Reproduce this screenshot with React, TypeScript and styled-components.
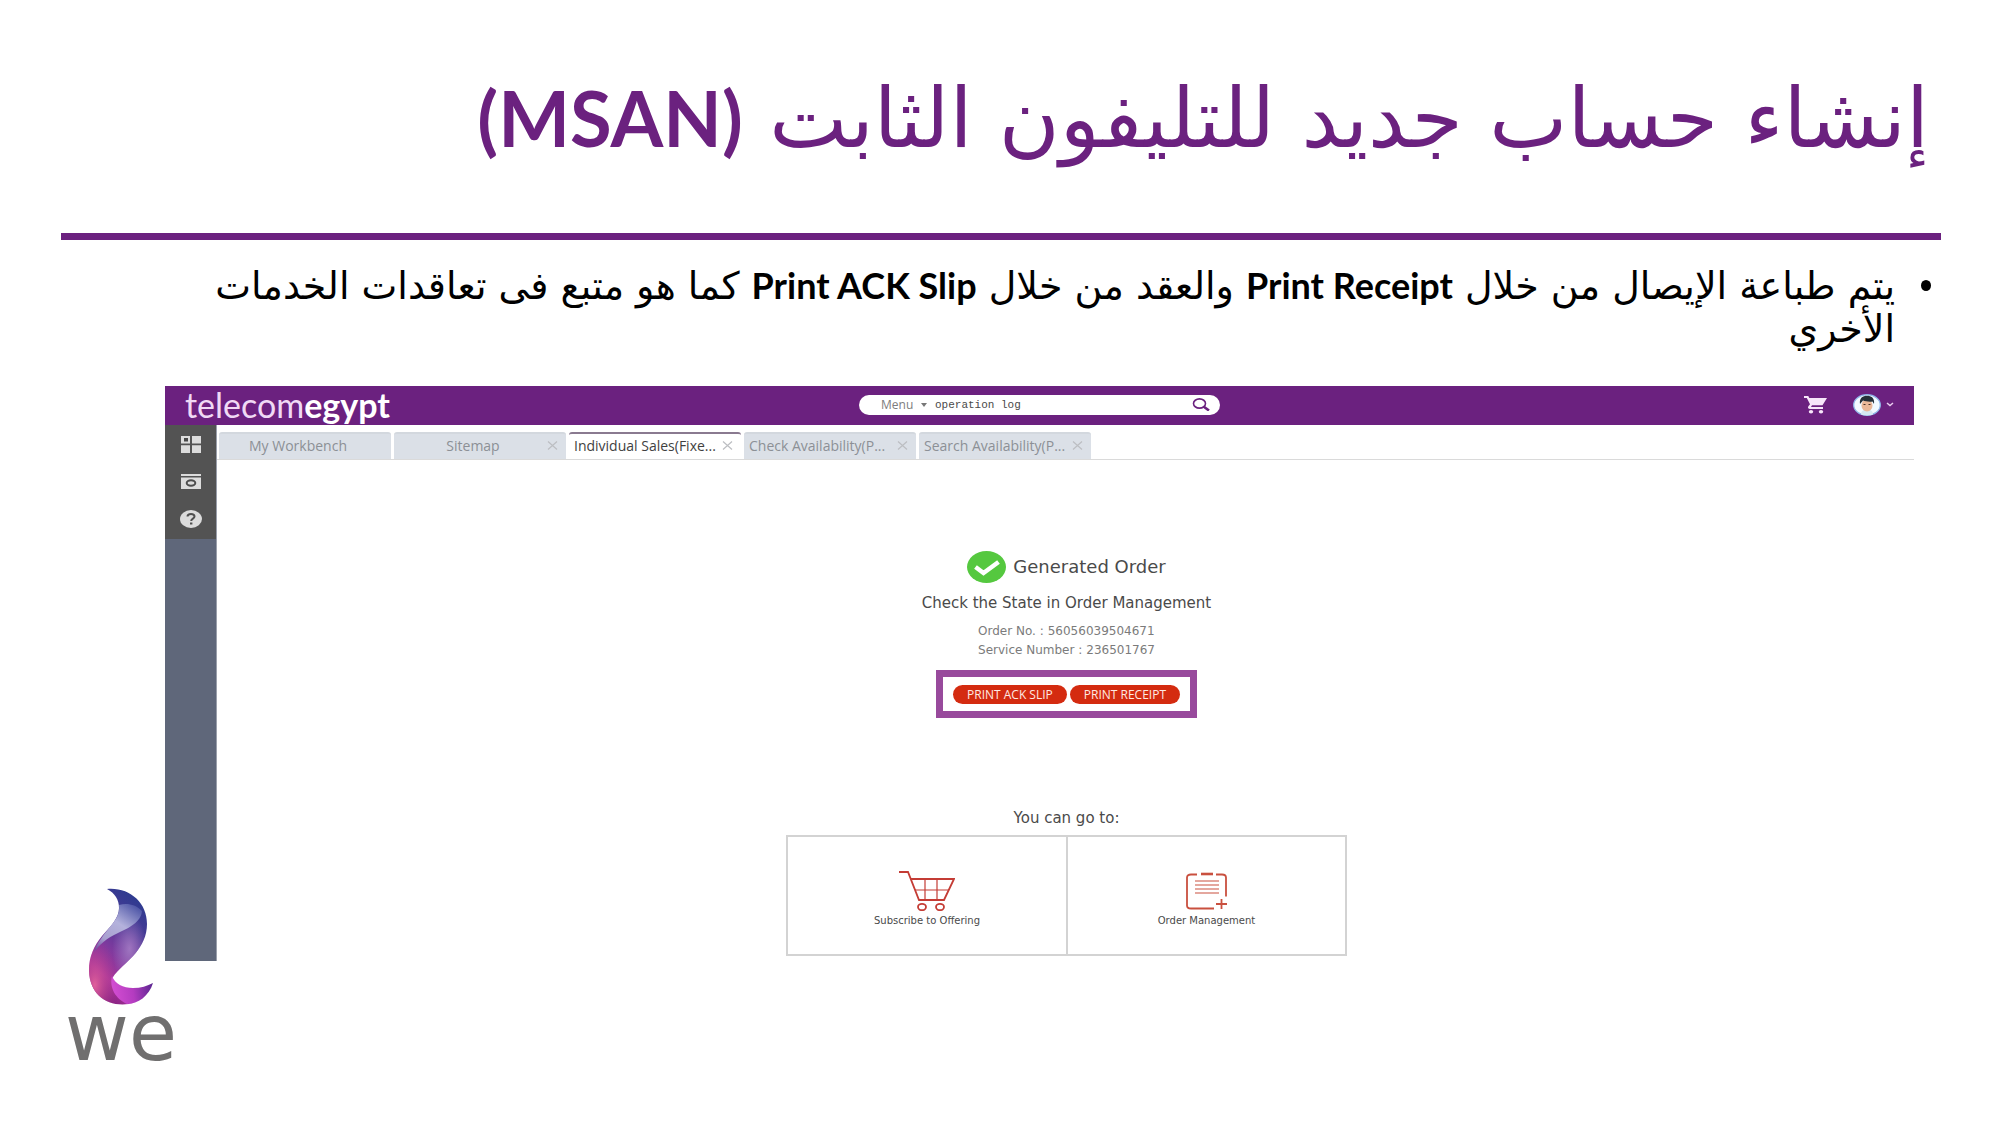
import React from "react";
import styled, { createGlobalStyle } from "styled-components";

const GlobalStyle = createGlobalStyle`
  *, *::before, *::after { box-sizing: border-box; }
  body { margin: 0; background: #ffffff; }
  h1, h2, p, ul, dl, dd { margin: 0; padding: 0; }
  button, input, select { font: inherit; color: inherit; border: 0; background: none; padding: 0; margin: 0; }
  button { cursor: pointer; }
`;

const purple = "#6b217f";

const Slide = styled.main`
  min-height: 100vh;
  padding: 68px 59px 0 61px;
  font-family: "DejaVu Sans", sans-serif;
`;

const TitleBar = styled.header`
  height: 172px;
  padding: 0 12px;
  border-bottom: 7px solid ${purple};
`;

const Title = styled.h1`
  color: ${purple};
  font-size: 83px;
  line-height: 100px;
  font-weight: 400;
  text-align: right;
  white-space: nowrap;
`;

const TitleLatin = styled.span`
  font-family: Lato, sans-serif;
  font-size: 76px;
  font-weight: 700;
`;

const Notes = styled.ul`
  padding: 24px 46px 0 120px;
  list-style: none;
  color: #000000;
`;

const Note = styled.li`
  position: relative;
  font-size: 38px;
  line-height: 43px;

  &::before {
    content: "";
    position: absolute;
    top: 16px;
    right: -36px;
    width: 10px;
    height: 11px;
    border-radius: 50%;
    background: #000000;
  }
`;

const NoteLatin = styled.span`
  font-family: Lato, sans-serif;
  font-size: 36px;
  font-weight: 700;
`;

const Figure = styled.section`
  position: relative;
  padding: 35px 27px 0 104px;
`;

const Screen = styled.div`
  font-size: 12px;
  color: #4a4a4a;
`;

const AppBar = styled.div`
  display: grid;
  grid-template-columns: 1fr 361px 1fr;
  align-items: center;
  height: 39px;
  padding: 0 20px 2px;
  background: ${purple};
`;

const Brand = styled.div`
  color: #f0d9f5;
  font-family: Lato, sans-serif;
  font-size: 34px;
  line-height: 36px;
`;

const BrandStrong = styled.strong`
  color: #ffffff;
  font-weight: 700;
`;

const SearchBox = styled.form`
  display: flex;
  align-items: center;
  gap: 8px;
  height: 20px;
  padding: 0 10px 0 22px;
  border-radius: 10px;
  background: #ffffff;
`;

const MenuPicker = styled.label`
  display: flex;
  align-items: center;
  gap: 6px;
  color: #7d7d7d;
`;

const MenuSelect = styled.select`
  appearance: none;
  width: 34px;
  font-family: "Open Sans", sans-serif;
  font-size: 12px;
  line-height: 16px;
`;

const SearchInput = styled.input`
  flex: 1;
  min-width: 0;
  font-family: "Liberation Mono", monospace;
  font-size: 11px;
  line-height: 16px;
  outline: none;
`;

const IconButton = styled.button`
  display: flex;
  align-items: center;
  color: ${purple};
`;

const BarActions = styled.div`
  display: flex;
  align-items: center;
  justify-content: flex-end;
  gap: 26px;
`;

const Account = styled.button`
  display: flex;
  align-items: center;
  gap: 5px;
`;

const Workspace = styled.div`
  display: grid;
  grid-template-columns: 52px 1fr;
  height: 536px;
`;

const SideBar = styled.nav`
  background: #5f677a;
  border-right: 1px solid #9a9fab;
`;

const SideTools = styled.div`
  display: flex;
  flex-direction: column;
  align-items: center;
  justify-content: space-around;
  height: 114px;
  background: #535353;
`;

const Content = styled.div`
  display: flex;
  flex-direction: column;
  min-width: 0;
`;

const Tabs = styled.div`
  display: flex;
  gap: 3px;
  height: 35px;
  padding: 7px 0 0 2px;
  border-bottom: 1px solid #dadada;
`;

const Tab = styled.div<{ $active?: boolean }>`
  display: flex;
  align-items: center;
  width: 172px;
  padding: 0 8px 2px 5px;
  border-top: 2px solid ${(p) => (p.$active ? "#8a7a90" : "#d3d8de")};
  border-radius: 3px 3px 0 0;
  background: ${(p) => (p.$active ? "#ffffff" : "#dbe0e7")};
  color: ${(p) => (p.$active ? "#3f3f3f" : "#8c9096")};
`;

const TabLabel = styled.button<{ $center?: boolean }>`
  flex: 1;
  font-family: "Open Sans", sans-serif;
  font-size: 14px;
  line-height: 20px;
  white-space: nowrap;
  text-align: ${(p) => (p.$center ? "center" : "left")};
`;

const TabClose = styled.button<{ $hidden?: boolean }>`
  display: flex;
  color: #bcbec2;
  visibility: ${(p) => (p.$hidden ? "hidden" : "visible")};
`;

const Result = styled.div`
  display: flex;
  flex-direction: column;
  align-items: center;
  padding: 89px 0 0 2px;
`;

const ResultHead = styled.div`
  display: flex;
  align-items: center;
  gap: 7px;
`;

const ResultTitle = styled.h2`
  font-size: 18px;
  line-height: 36px;
  font-weight: 400;
`;

const ResultText = styled.p`
  padding-top: 6px;
  font-size: 15px;
  line-height: 24px;
`;

const Facts = styled.dl`
  padding-top: 7px;
  color: #7b7b7b;
  font-size: 12px;
  line-height: 19px;
`;

const Fact = styled.div`
  display: flex;
  gap: 4px;
`;

const Highlight = styled.div`
  display: flex;
  gap: 3px;
  align-items: center;
  justify-content: center;
  width: 261px;
  height: 48px;
  margin-top: 10px;
  border: 7px solid #984a9c;
`;

const PrintButton = styled.button`
  height: 19px;
  padding: 0 14px;
  border-radius: 10px;
  background: #d42b10;
  color: #ffe9e2;
  font-family: "Open Sans", sans-serif;
  font-size: 12px;
  line-height: 19px;
  white-space: nowrap;
`;

const NextTitle = styled.p`
  padding: 88px 0 5px;
  font-size: 15px;
  line-height: 24px;
`;

const NextGrid = styled.div`
  display: grid;
  grid-template-columns: 278px 279px;
  height: 121px;
  border: 2px solid #d3d3d3;
`;

const NextCard = styled.a`
  display: flex;
  flex-direction: column;
  align-items: center;
  justify-content: center;
  gap: 2px;
  padding-top: 8px;
  color: #4a4a4a;
  font-size: 10px;
  line-height: 16px;
  text-decoration: none;

  & + & { border-left: 2px solid #d3d3d3; }
`;

const Logo = styled.div`
  position: absolute;
  left: 0;
  bottom: -100px;
  display: flex;
  flex-direction: column;
  align-items: center;
  width: 120px;
`;

const LogoText = styled.span`
  color: #706f6f;
  font-size: 78px;
  line-height: 56px;
`;

const CloseIcon = () => (
  <svg width="11" height="9" viewBox="0 0 11 9" stroke="currentColor" strokeWidth="1.2">
    <path d="M1 0.5 10 8.5M10 0.5 1 8.5" />
  </svg>
);

const GridIcon = () => (
  <svg width="20" height="17" viewBox="0 0 20 17" fill="#dcdcdc">
    <path d="M0 0h9v7.5H0zM11 0h9v7.5h-9zM0 9.300h9V17H0zM11 9.300h9V17h-9z" />
    <path d="M3 2h4v3.500H3z" fill="#474747" />
  </svg>
);

const ViewIcon = () => (
  <svg width="20" height="15" viewBox="0 0 20 15" fill="#dcdcdc">
    <path d="M0 0h20v2H0zM0 3.500h20V15H0z" />
    <ellipse cx="10" cy="9" rx="4.300" ry="2.700" fill="none" stroke="#4d4d4d" strokeWidth="2" />
  </svg>
);

const HelpIcon = () => (
  <svg width="22" height="18" viewBox="0 0 22 18">
    <ellipse cx="11" cy="9" rx="11" ry="9" fill="#dcdcdc" />
    <path d="M7.500 6.500c0-3.500 7-3.500 7 0 0 2.200-3.300 2-3.300 4.500" fill="none" stroke="#505050" strokeWidth="2" />
    <path d="M10 12.500h2.400v2H10z" fill="#505050" />
  </svg>
);

const SearchIcon = () => (
  <svg width="18" height="13" viewBox="0 0 18 13" fill="none" stroke="currentColor">
    <ellipse cx="7.500" cy="5.500" rx="6" ry="4.600" strokeWidth="1.600" />
    <path d="m11.500 8.500 5.500 4" strokeWidth="2.600" />
  </svg>
);

const CartIcon = () => (
  <svg width="23" height="18" viewBox="0 0 23 18" fill="#f7e6fa">
    <path d="M0 0h4.300l1 2H23l-4.500 7.200H8l-1 1.800h12v2H6.200c-2.200 0-2.700-1.400-1.800-2.700L6 8.300 2.800 2H0z" />
    <ellipse cx="7" cy="15.800" rx="2.200" ry="1.800" />
    <ellipse cx="17" cy="15.800" rx="2.200" ry="1.800" />
  </svg>
);

const AvatarIcon = () => (
  <svg width="28" height="22" viewBox="0 0 28 22">
    <ellipse cx="14" cy="11" rx="13.300" ry="10.300" fill="#f2faff" stroke="#8fb6e8" strokeWidth="1.300" />
    <path d="M8 20.500c0-4 3-5 6-5s6 1 6 5c-3 1.200-9 1.200-12 0z" fill="#d5e9f2" />
    <ellipse cx="14" cy="11.500" rx="5.500" ry="6" fill="#eab898" />
    <path d="M7 10C6 4 10 1.800 14 1.800S22 4 21 10l-1.500-2.500C17 8 12 7.500 10 6.500z" fill="#243038" />
    <path d="M10.500 10.500h2M15.500 10.500h2" stroke="#4a3328" />
  </svg>
);

const ChevronIcon = () => (
  <svg width="8" height="5" viewBox="0 0 8 5" fill="none" stroke="#e9cdef" strokeWidth="1.500">
    <path d="m1 1 3 2.500L7 1" />
  </svg>
);

const CheckIcon = () => (
  <svg width="39" height="32" viewBox="0 0 39 32">
    <ellipse cx="19.500" cy="16" rx="19.500" ry="16" fill="#55c83f" />
    <path d="m8.500 16 8 6L31.500 11" fill="none" stroke="#fff" strokeWidth="4.500" />
  </svg>
);

const OfferCartIcon = () => (
  <svg width="56" height="40" viewBox="0 0 56 40" fill="none" stroke="#c43c35" strokeWidth="1.800">
    <path d="M0 1h9l11 28h25L55 8H12" />
    <path d="M16 19h34M26 8v21M38 8v21" strokeWidth="1.200" />
    <ellipse cx="23" cy="36" rx="4" ry="3.200" />
    <ellipse cx="41" cy="36" rx="4" ry="3.200" />
  </svg>
);

const OrderIcon = () => (
  <svg width="42" height="40" viewBox="0 0 42 40" fill="none" stroke="#c9503f" strokeWidth="1.800">
    <path d="M11 3.500H5C2.500 3.500 1 4.500 1 6.500v28c0 2 1.500 3 4 3h23M30 3.500h6c2.500 0 4 1 4 3v19" />
    <path d="M15 3h12" strokeWidth="2.600" />
    <path d="M9 10h24M9 14h24M9 18h24M9 22h24" strokeWidth="1.200" />
    <path d="M30 33h11M35.500 28v10" />
  </svg>
);

const flamePath =
  "M18 1C40-1 58 14 58 36 58 60 38 73 28 84 22 90 22 94 25 98 31 107 43 115 40 116 18 119 1 107 0 83 0 68 5 58 13 48 22 38 30 30 30 20 30 12 26 5 18 1Z";

const SwirlIcon = () => (
  <svg width="65" height="117" viewBox="0 0 65 117">
    <defs>
      <linearGradient id="body" x1="0.700" y1="0" x2="0.300" y2="1">
        <stop offset="0" stopColor="#2b3b8f" />
        <stop offset="0.300" stopColor="#4a3a96" />
        <stop offset="0.550" stopColor="#7d3a9e" />
        <stop offset="0.800" stopColor="#a8359a" />
        <stop offset="1" stopColor="#7f1d7c" />
      </linearGradient>
      <radialGradient id="glow" cx="0.100" cy="0.830" r="0.400">
        <stop offset="0" stopColor="#e0609c" />
        <stop offset="1" stopColor="#b0358f" stopOpacity="0" />
      </radialGradient>
      <radialGradient id="sheen" cx="0.700" cy="0.520" r="0.300">
        <stop offset="0" stopColor="#a57bc4" stopOpacity="0.900" />
        <stop offset="1" stopColor="#a57bc4" stopOpacity="0" />
      </radialGradient>
      <linearGradient id="fold" x1="0.800" y1="0" x2="0.100" y2="1">
        <stop offset="0" stopColor="#5058a8" />
        <stop offset="0.400" stopColor="#b4b2dc" />
        <stop offset="0.750" stopColor="#a9a0d0" />
        <stop offset="1" stopColor="#7050a0" />
      </linearGradient>
      <linearGradient id="tail" x1="0" y1="0.400" x2="1" y2="0.300">
        <stop offset="0" stopColor="#d44ed2" />
        <stop offset="0.500" stopColor="#b43cc0" />
        <stop offset="1" stopColor="#5a2590" />
      </linearGradient>
    </defs>
    <path d={flamePath} fill="url(#body)" />
    <path d={flamePath} fill="url(#glow)" />
    <path d={flamePath} fill="url(#sheen)" />
    <path d="M30 17C38 15 46 16 53 23 52 34 40 40 29 45 18 50 10 57 5 64 8 55 14 48 20 40 27 32 31 26 30 17Z" fill="url(#fold)" />
    <path d="M23 88C26 96 34 100 44 100 52 100 58 98 64 95 60 108 49 116 38 116 27 111 20 100 23 88Z" fill="url(#tail)" />
  </svg>
);

const tabs = [
  { label: "My Workbench", center: true, closable: false },
  { label: "Sitemap", center: true, closable: true },
  { label: "Individual Sales(Fixe...", active: true, closable: true },
  { label: "Check Availability(P...", closable: true },
  { label: "Search Availability(P...", closable: true },
];

export default function App() {
  return (
    <>
      <GlobalStyle />
      <Slide>
        <TitleBar>
          <Title dir="rtl" lang="ar">
            إنشاء حساب جديد للتليفون الثابت <TitleLatin>(MSAN)</TitleLatin>
          </Title>
        </TitleBar>
        <Notes dir="rtl" lang="ar">
          <Note>
            يتم طباعة الإيصال من خلال <NoteLatin>Print Receipt</NoteLatin> والعقد من خلال{" "}
            <NoteLatin>Print ACK Slip</NoteLatin> كما هو متبع فى تعاقدات الخدمات الأخري
          </Note>
        </Notes>
        <Figure>
          <Screen>
            <AppBar>
              <Brand>
                telecom<BrandStrong>egypt</BrandStrong>
              </Brand>
              <SearchBox onSubmit={(e) => e.preventDefault()}>
                <MenuPicker>
                  <MenuSelect aria-label="Search scope" defaultValue="Menu">
                    <option>Menu</option>
                  </MenuSelect>
                  <svg width="6" height="4" viewBox="0 0 6 4" fill="#777">
                    <path d="M0 0h6L3 4z" />
                  </svg>
                </MenuPicker>
                <SearchInput aria-label="Search" defaultValue="operation log" />
                <IconButton type="submit" aria-label="Search">
                  <SearchIcon />
                </IconButton>
              </SearchBox>
              <BarActions>
                <IconButton aria-label="Cart">
                  <CartIcon />
                </IconButton>
                <Account aria-label="Account">
                  <AvatarIcon />
                  <ChevronIcon />
                </Account>
              </BarActions>
            </AppBar>
            <Workspace>
              <SideBar>
                <SideTools>
                  <IconButton aria-label="Dashboard"><GridIcon /></IconButton>
                  <IconButton aria-label="Views"><ViewIcon /></IconButton>
                  <IconButton aria-label="Help"><HelpIcon /></IconButton>
                </SideTools>
              </SideBar>
              <Content>
                <Tabs>
                  {tabs.map((tab) => (
                    <Tab key={tab.label} $active={tab.active}>
                      <TabLabel $center={tab.center}>{tab.label}</TabLabel>
                      <TabClose $hidden={!tab.closable} aria-label={`Close ${tab.label}`}>
                        <CloseIcon />
                      </TabClose>
                    </Tab>
                  ))}
                </Tabs>
                <Result>
                  <ResultHead>
                    <CheckIcon />
                    <ResultTitle>Generated Order</ResultTitle>
                  </ResultHead>
                  <ResultText>Check the State in Order Management</ResultText>
                  <Facts>
                    <Fact><dt>Order No. :</dt><dd>56056039504671</dd></Fact>
                    <Fact><dt>Service Number :</dt><dd>236501767</dd></Fact>
                  </Facts>
                  <Highlight>
                    <PrintButton>PRINT ACK SLIP</PrintButton>
                    <PrintButton>PRINT RECEIPT</PrintButton>
                  </Highlight>
                  <NextTitle>You can go to:</NextTitle>
                  <NextGrid>
                    <NextCard href="#offering">
                      <OfferCartIcon />
                      Subscribe to Offering
                    </NextCard>
                    <NextCard href="#orders">
                      <OrderIcon />
                      Order Management
                    </NextCard>
                  </NextGrid>
                </Result>
              </Content>
            </Workspace>
          </Screen>
          <Logo>
            <SwirlIcon />
            <LogoText>we</LogoText>
          </Logo>
        </Figure>
      </Slide>
    </>
  );
}
